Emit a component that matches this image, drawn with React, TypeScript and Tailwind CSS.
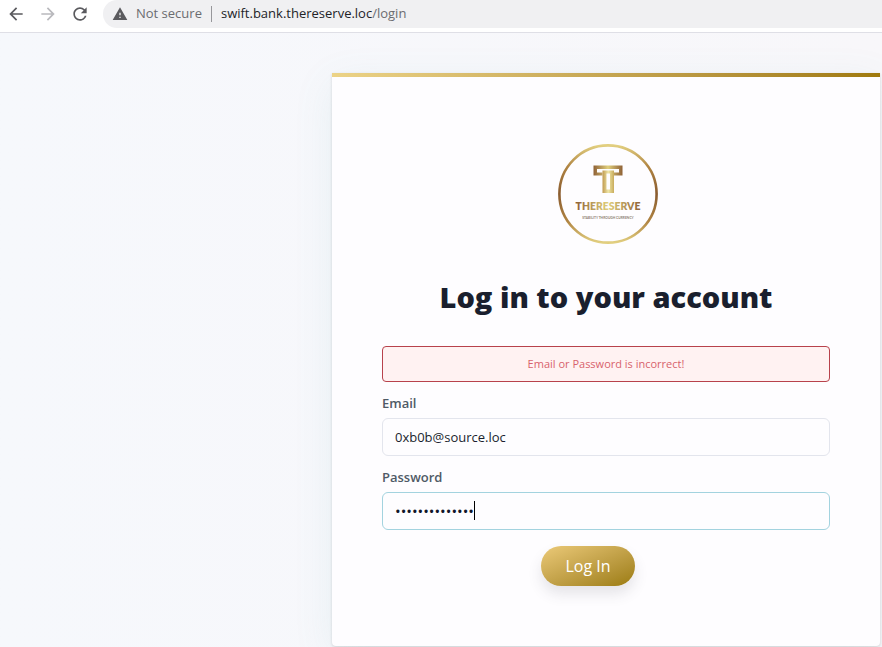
import { useState } from "react";
import { MdArrowBack, MdArrowForward, MdRefresh, MdWarning } from "react-icons/md";

function BrowserBar() {
  return (
    <header className="flex h-[33px] items-start border-b border-[#dfdfe6] bg-white">
      <nav className="flex h-7 w-[103px] shrink-0 items-center gap-3 pl-[6px]">
        <button type="button" aria-label="Back" className="text-[#5a5a5e]">
          <MdArrowBack size={20} />
        </button>
        <button type="button" aria-label="Forward" className="text-[#b9b9bd]">
          <MdArrowForward size={20} />
        </button>
        <button type="button" aria-label="Reload" className="text-[#5a5a5e]">
          <MdRefresh size={20} />
        </button>
      </nav>
      <div className="flex h-7 flex-1 items-center rounded-l-full bg-[#f0f0f2] pl-[9px] text-[13px]">
        <MdWarning size={16} className="text-[#5a5a5e]" />
        <span className="ml-2 text-[#6b6c70]">Not secure</span>
        <span className="mr-[9px] ml-[9px] h-4 w-px bg-[#97979b]" />
        <span className="text-[#222327]">
          swift.bank.thereserve.loc<span className="text-[#6b6c70]">/login</span>
        </span>
      </div>
    </header>
  );
}

function Logo() {
  return (
    <svg width="100" height="100" viewBox="0 0 100 100" role="img" aria-label="TheReserve">
      <defs>
        <linearGradient id="ring" x1="0" y1="0" x2="0" y2="1">
          <stop offset="0" stopColor="#e2cf80" />
          <stop offset="0.22" stopColor="#b08442" />
          <stop offset="0.5" stopColor="#8a5c30" />
          <stop offset="0.78" stopColor="#b08442" />
          <stop offset="1" stopColor="#e2cf80" />
        </linearGradient>
        <linearGradient id="gold" x1="0" y1="0" x2="1" y2="0">
          <stop offset="0" stopColor="#8f6136" />
          <stop offset="0.5" stopColor="#e0cf7c" />
          <stop offset="1" stopColor="#8f6136" />
        </linearGradient>
        <linearGradient id="stem" x1="0" y1="0" x2="1" y2="0">
          <stop offset="0" stopColor="#c09a50" />
          <stop offset="0.5" stopColor="#efe6a8" />
          <stop offset="1" stopColor="#c9ac5c" />
        </linearGradient>
      </defs>
      <circle cx="50" cy="50" r="48.6" fill="none" stroke="url(#ring)" strokeWidth="2.6" />
      {/* crossbar, then the stem that rises into it */}
      <path
        d="M35.5 21.5H64.5V31.5H56V28.5H61V25H39V28.5H44.5V31.5H35.5Z"
        fill="url(#gold)"
      />
      <path d="M44.5 26.5H56V49H44.5Z M48.5 29.5V45.5H52V29.5Z" fill="url(#stem)" fillRule="evenodd" />
      <text
        x="50"
        y="66"
        textAnchor="middle"
        fontFamily="Lato, sans-serif"
        fontWeight="800"
        fontSize="10.4"
        fill="url(#gold)"
      >
        THERESERVE
      </text>
      <text
        x="50"
        y="75"
        textAnchor="middle"
        fontFamily="Lato, sans-serif"
        fontWeight="700"
        fontSize="3.3"
        fill="#8d8070"
      >
        STABILITY THROUGH CURRENCY
      </text>
    </svg>
  );
}

export default function App() {
  const [email, setEmail] = useState("0xb0b@source.loc");
  const [password, setPassword] = useState("correcthorse12");

  return (
    <div className="flex min-h-screen flex-col bg-[#f8f8fb] font-['Open_Sans','Noto_Sans',sans-serif]">
      <BrowserBar />
      <main className="flex flex-1 justify-end bg-linear-to-r from-[#f6f8fc] to-[#f8f7fa] pt-10 pr-[2px]">
        <section className="mb-px w-full max-w-[548px] self-start rounded-b bg-[#fefdff] shadow-[0_1px_3px_rgba(0,0,0,0.14),0_10px_40px_rgba(90,170,170,0.1)]">
          <div className="h-1 bg-linear-to-r from-[#ecd387] to-[#a07a0c]" />
          <div className="flex flex-col px-[50px] pt-[67px] pb-[60px]">
            <div className="flex justify-center pl-1">
              <Logo />
            </div>
            <h1 className="mt-[35px] text-center text-[29px] leading-9 font-extrabold text-[#1a1f2e]">
              Log in to your account
            </h1>
            <p
              role="alert"
              className="mt-[31px] rounded border border-[#b8424c] bg-[#fff2f2] py-2 text-center text-[11px] leading-[18px] text-[#d8626c]"
            >
              Email or Password is incorrect!
            </p>
            <form className="flex flex-col" onSubmit={(e) => e.preventDefault()}>
              <label htmlFor="email" className="mt-[11px] text-[13px] leading-5 font-semibold text-[#4f5a66]">
                Email
              </label>
              <input
                id="email"
                type="email"
                value={email}
                onChange={(e) => setEmail(e.target.value)}
                className="mt-[5px] h-[38px] rounded-md border border-[#e3e5ed] px-3 text-[13px] text-[#1a1f2e] outline-none"
              />
              <label htmlFor="password" className="mt-[11px] text-[13px] leading-5 font-semibold text-[#4f5a66]">
                Password
              </label>
              <div className="relative mt-[5px] flex">
                <input
                  id="password"
                  type="password"
                  value={password}
                  onChange={(e) => setPassword(e.target.value)}
                  className="h-[38px] w-full rounded-md border border-[#a3d3df] px-3 text-[15px] text-[#10162a] caret-transparent outline-none"
                />
                <span className="absolute top-[9px] left-[92px] h-[19px] w-px bg-black" />
              </div>
              <button
                type="submit"
                className="mt-4 mr-9 h-10 self-center rounded-full bg-linear-to-br from-[#ecca78] to-[#9c7c0a] px-6 text-base text-white shadow-[0_8px_14px_rgba(60,60,80,0.13)]"
              >
                Log In
              </button>
            </form>
          </div>
        </section>
      </main>
    </div>
  );
}
